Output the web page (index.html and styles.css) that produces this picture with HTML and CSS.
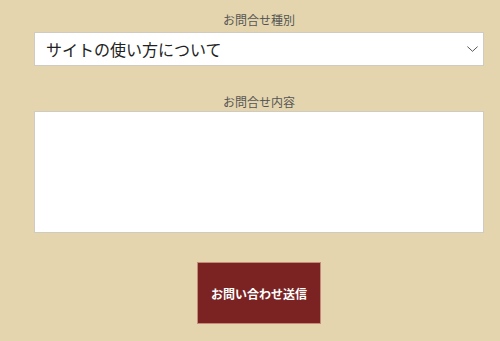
FILE: index.html
```html
<!DOCTYPE html>
<html lang="ja">
<head>
<meta charset="utf-8">
<link rel="stylesheet" href="styles.css">
</head>
<body>
<form class="form">
  <div class="group group-first">
    <label class="label" for="kind">お問合せ種別</label>
    <div class="select-wrap">
      <select id="kind" class="select">
        <option>サイトの使い方について</option>
      </select>
      <svg class="chevron" width="11" height="6" viewBox="0 0 11 6"><path d="M0.4 0.6 L5.5 5.3 L10.6 0.6" fill="none" stroke="#444" stroke-width="0.9"/></svg>
    </div>
  </div>
  <div class="group group-second">
    <label class="label label-second" for="body">お問合せ内容</label>
    <textarea id="body" class="textarea"></textarea>
  </div>
  <div class="actions">
    <button type="button" class="submit">お問い合わせ送信</button>
  </div>
</form>
</body>
</html>
```
FILE: styles.css
```css
html, body {
  margin: 0;
  padding: 0;
  background: #e4d5ae;
}
body {
  font-family: "Noto Sans CJK JP", "Noto Sans", sans-serif;
  color: #555;
}
.form {
  width: 450px;
  margin-left: 34px;
  padding-top: 12px;
}
.group {
  display: flex;
  flex-direction: column;
}
.label {
  text-align: center;
  font-size: 12px;
  line-height: 16px;
  color: #555;
  margin-bottom: 4px;
}
.label-second {
  margin-bottom: 1px;
}
.group-second {
  margin-top: 28px;
}
.select-wrap {
  position: relative;
}
.select {
  appearance: none;
  -webkit-appearance: none;
  display: block;
  width: 100%;
  height: 34px;
  margin: 0;
  padding: 0 30px 0 11px;
  border: 1px solid #d0cbc0;
  border-radius: 0;
  background: #fff;
  font-family: "Noto Sans CJK JP", sans-serif;
  font-size: 16px;
  color: #222;
  outline: none;
}
.chevron {
  position: absolute;
  right: 6px;
  top: 14px;
}
.textarea {
  display: block;
  box-sizing: border-box;
  width: 100%;
  height: 122px;
  margin: 0;
  border: 1px solid #d0cbc0;
  border-radius: 0;
  background: #fff;
  resize: none;
  outline: none;
}
.actions {
  display: flex;
  justify-content: center;
  margin-top: 29px;
}
.submit {
  width: 124px;
  height: 62px;
  margin: 0;
  padding: 0;
  border: 1px solid #c38c7a;
  border-radius: 0;
  background: #7a2322;
  color: #fff;
  font-family: "Noto Sans CJK JP", sans-serif;
  font-weight: 700;
  font-size: 12px;
}
```
